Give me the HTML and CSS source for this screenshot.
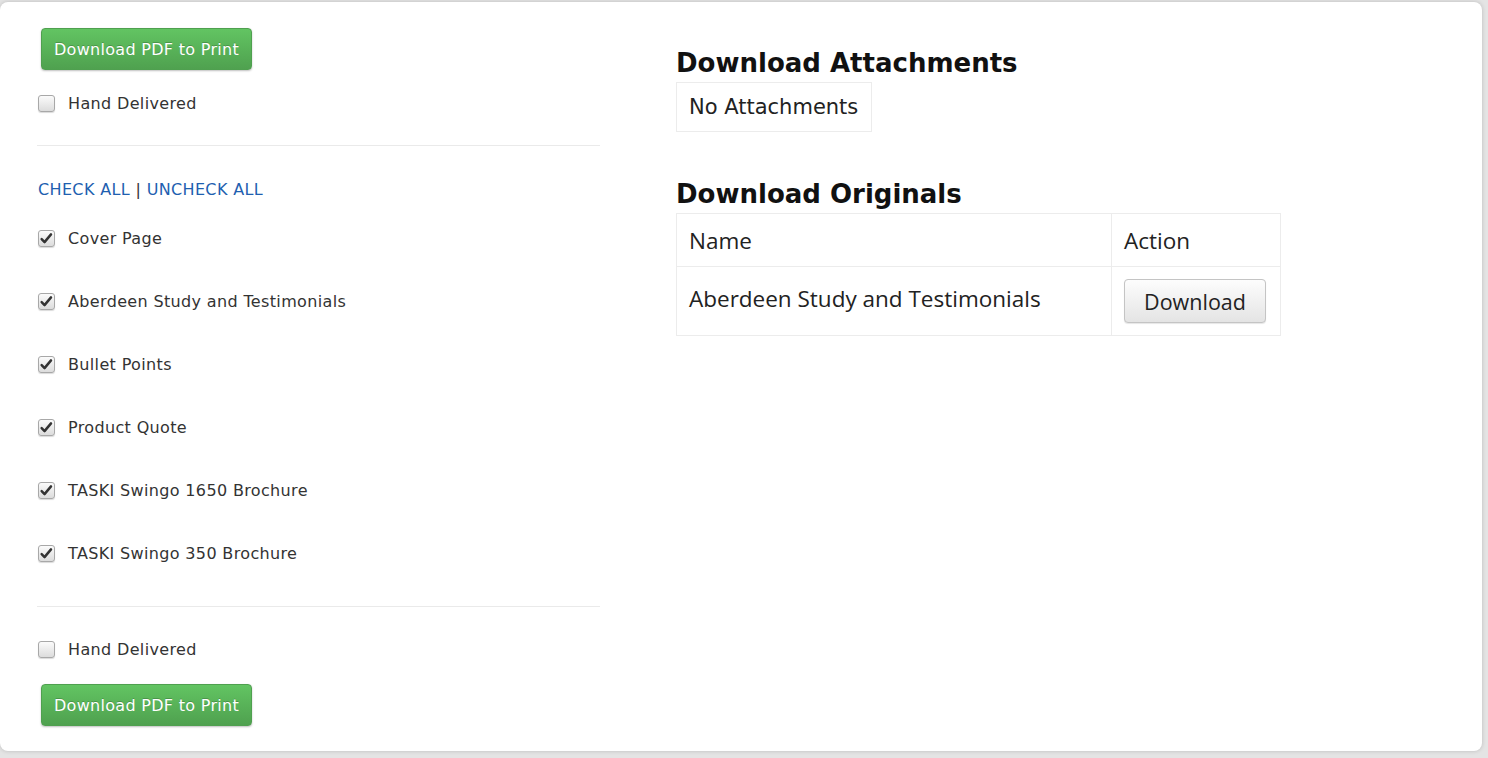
FILE: index.html
```html
<!DOCTYPE html>
<html lang="en">
<head>
  <meta charset="UTF-8" />
  <meta name="viewport" content="width=device-width, initial-scale=1.0"/>
  <title>Print Package</title>
  <link rel="stylesheet" href="styles.css">
</head>
<body>
  <div class="card">
    <div class="left-col">
      <button class="btn-success">Download PDF to Print</button>
      <label class="check-row hand"><input type="checkbox"> Hand Delivered</label>

      <hr>

      <div class="check-links">
        <a href="#">CHECK ALL</a> | <a href="#">UNCHECK ALL</a>
      </div>

      <ul class="doc-list">
        <li><label class="check-row"><input type="checkbox" checked> Cover Page</label></li>
        <li><label class="check-row"><input type="checkbox" checked> Aberdeen Study and Testimonials</label></li>
        <li><label class="check-row"><input type="checkbox" checked> Bullet Points</label></li>
        <li><label class="check-row"><input type="checkbox" checked> Product Quote</label></li>
        <li><label class="check-row"><input type="checkbox" checked> TASKI Swingo 1650 Brochure</label></li>
        <li><label class="check-row"><input type="checkbox" checked> TASKI Swingo 350 Brochure</label></li>
      </ul>

      <hr>

      <label class="check-row hand bottom"><input type="checkbox"> Hand Delivered</label>
      <button class="btn-success">Download PDF to Print</button>
    </div>

    <div class="right-col">
      <h2>Download Attachments</h2>
      <div class="empty-box">No Attachments</div>

      <h2 class="second">Download Originals</h2>
      <table class="originals">
        <tr>
          <th class="name-col">Name</th>
          <th class="action-col">Action</th>
        </tr>
        <tr>
          <td>Aberdeen Study and Testimonials</td>
          <td><button class="btn-default">Download</button></td>
        </tr>
      </table>
    </div>
  </div>
</body>
</html>
```

FILE: styles.css
```css
body {
  margin: 0;
  background-color: #e4e4e4;
  font-family: 'DejaVu Sans', Verdana, sans-serif;
  color: #333;
  height: 758px;
  overflow: hidden;
}

.card {
  margin-top: 2px;
  width: 1482px;
  height: 749px;
  box-sizing: border-box;
  background: #fff;
  border-radius: 8px;
  box-shadow: 0 0 4px rgba(0, 0, 0, 0.18);
  padding: 26px 0 0 38px;
  display: flex;
  gap: 76px;
}

.left-col {
  width: 562px;
}

.btn-success {
  margin-left: 3px;
  width: 211px;
  height: 42px;
  font-family: 'DejaVu Sans', Verdana, sans-serif;
  font-size: 16px;
  letter-spacing: 0.3px;
  color: #fff;
  text-shadow: 0 -1px 0 rgba(0, 0, 0, 0.2);
  border: 1px solid #4fa04f;
  border-radius: 4px;
  background-image: linear-gradient(#62c462, #4fa14f);
  box-shadow: 0 1px 2px rgba(0, 0, 0, 0.25);
  cursor: pointer;
  padding: 0;
}

.check-row {
  display: flex;
  align-items: center;
  font-size: 16px;
  letter-spacing: 0.35px;
  color: #333;
  height: 20px;
}

.check-row input {
  appearance: none;
  -webkit-appearance: none;
  width: 17px;
  height: 17px;
  margin: 1px 13px 0 0;
  border: 1px solid #a8a8a8;
  border-radius: 3px;
  background-image: linear-gradient(#fbfbfb, #dcdcdc);
  box-shadow: 0 1px 1px rgba(0, 0, 0, 0.15);
  flex-shrink: 0;
}

.check-row input:checked {
  background-image: url("data:image/svg+xml,%3Csvg xmlns='http://www.w3.org/2000/svg' viewBox='0 0 17 17'%3E%3Cpath d='M3 9.2 L6.3 12.6 L13.6 3.8' fill='none' stroke='%23333' stroke-width='2.8' stroke-linecap='round' stroke-linejoin='round'/%3E%3C/svg%3E"), linear-gradient(#fbfbfb, #dcdcdc);
  background-size: 15px 15px, auto;
  background-position: center, center;
  background-repeat: no-repeat;
}

.hand {
  margin-top: 23px;
}

.hand.bottom {
  margin-top: 32px;
  margin-bottom: 25px;
}

hr {
  border: none;
  border-top: 1px solid #eaeaea;
  margin: 32px 0 0 -1px;
}

.check-links {
  margin-top: 34px;
  font-size: 16px;
  letter-spacing: 0.35px;
  color: #333;
}

.check-links a {
  color: #1f5fb0;
  text-decoration: none;
}

.doc-list {
  list-style: none;
  margin: 29px 0 0;
  padding: 0;
}

.doc-list li {
  margin-bottom: 43px;
}

.right-col {
  width: 620px;
}

h2 {
  font-family: 'DejaVu Sans', sans-serif;
  font-size: 26px;
  line-height: 30px;
  font-weight: bold;
  color: #111;
  margin: 20px 0 4px;
}

h2.second {
  margin-top: 47px;
  margin-bottom: 4px;
}

.empty-box {
  display: inline-block;
  border: 1px solid #ececec;
  padding: 12px 13px 12px 12px;
  font-size: 21px;
  line-height: 24px;
  color: #222;
}

.originals {
  border-collapse: collapse;
  width: 605px;
  font-family: 'Open Sans', sans-serif;
  font-size: 22.5px;
  color: #222;
}

.originals th,
.originals td {
  border: 1px solid #ececec;
  text-align: left;
  font-weight: normal;
  padding: 0 12px;
}

.originals th {
  height: 52px;
}

.originals td {
  height: 69px;
  vertical-align: top;
  padding-top: 16px;
  box-sizing: border-box;
}

.name-col {
  width: 410px;
}

.btn-default {
  margin-top: -4px;
  width: 142px;
  height: 44px;
  font-family: 'Open Sans', sans-serif;
  font-size: 21.5px;
  color: #222;
  border: 1px solid #c4c4c4;
  border-radius: 4px;
  background-image: linear-gradient(#fdfdfd, #e4e4e4);
  box-shadow: 0 1px 1px rgba(0, 0, 0, 0.1);
  cursor: pointer;
}
```
